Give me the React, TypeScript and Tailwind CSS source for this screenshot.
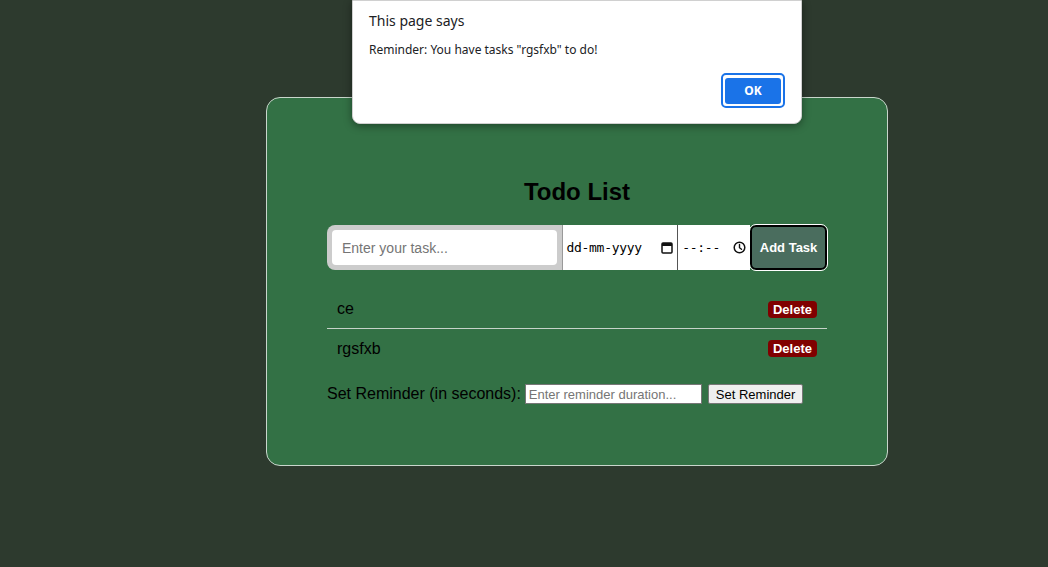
import React from 'react';

const tasks = ['ce', 'rgsfxb'];

const CalendarIcon = () => (
  <svg width="12" height="13" viewBox="0 0 12 13" fill="none">
    <rect x="1" y="2" width="10" height="10" rx="1" stroke="#111" strokeWidth="1.5" />
    <rect x="1" y="2" width="10" height="3" fill="#111" />
  </svg>
);

const ClockIcon = () => (
  <svg width="13" height="13" viewBox="0 0 13 13" fill="none">
    <circle cx="6.5" cy="6.5" r="5.3" stroke="#111" strokeWidth="1.5" />
    <path d="M6.5 3.5v3.2l2 1.6" stroke="#111" strokeWidth="1.4" strokeLinecap="round" />
  </svg>
);

const App: React.FC = () => {
  return (
    <div className="relative w-[1048px] h-[567px] bg-[#2d3a2e] overflow-hidden font-['Liberation_Sans',Arial,sans-serif]">
      <div className="pt-[97px] pl-[266px]">
        <div className="w-[622px] h-[369px] bg-[#337145] border border-[#c9d6cc] rounded-[14px] flex flex-col items-center pt-[79px]">
          <h1 className="text-[24px] font-bold text-black leading-[30px]">Todo List</h1>

          <div className="w-[500px] mt-[18px]">
            <div className="flex h-[45px]">
              <div className="w-[235px] bg-[#cccccc] rounded-l-[8px] p-[5px]">
                <input
                  className="w-full h-full bg-white rounded-[4px] px-[10px] text-[14px] text-black placeholder:text-[#757575] outline-none"
                  placeholder="Enter your task..."
                />
              </div>
              <div className="w-[116px] bg-white border-l border-[#999] flex items-center justify-between pl-[4px] pr-[4px] font-['DejaVu_Sans_Mono',monospace] text-[13px] text-black tracking-[-0.3px]">
                <span>dd-mm-yyyy</span>
                <CalendarIcon />
              </div>
              <div className="w-[73px] bg-white border-l border-[#555] flex items-center justify-between pl-[4px] pr-[4px] font-['DejaVu_Sans_Mono',monospace] text-[13px] text-black tracking-[-0.3px]">
                <span>--:--</span>
                <ClockIcon />
              </div>
              <button className="w-[77px] bg-[#4a6d5e] text-white text-[13px] font-bold rounded-[6px] border-2 border-black outline outline-1 outline-white">
                Add Task
              </button>
            </div>

            <ul className="mt-[20px]">
              {tasks.map((t, i) => (
                <li
                  key={t}
                  className={`flex items-center justify-between h-[39px] px-[10px] ${i === 0 ? 'border-b border-[#c7d3c9]' : ''}`}
                >
                  <span className="text-[16px] text-black">{t}</span>
                  <button className="bg-[#800000] text-white text-[13px] font-bold leading-[17px] px-[5px] rounded-[4px]">
                    Delete
                  </button>
                </li>
              ))}
            </ul>

            <div className="flex items-center mt-[14px] text-[16px] text-black">
              <span>Set Reminder (in seconds):</span>
              <input
                className="ml-[4px] w-[177px] h-[20px] bg-white border border-[#767676] px-[3px] text-[13px] placeholder:text-[#757575] outline-none"
                placeholder="Enter reminder duration..."
              />
              <button className="ml-[6px] h-[20px] px-[7px] bg-[#efefef] border border-[#767676] text-[13px] rounded-[2px]">
                Set Reminder
              </button>
            </div>
          </div>
        </div>
      </div>

      <div className="absolute left-[352px] top-0 w-[450px] h-[124px] bg-white rounded-b-[8px] shadow-[0_2px_8px_rgba(0,0,0,0.4)] border border-[#d0d0d0] font-['Noto_Sans',sans-serif] text-[#202124]">
        <div className="pl-[16px] pt-[9px] text-[14px] leading-[22px]">This page says</div>
        <div className="pl-[16px] pt-[9px] text-[12px] leading-[18px]">Reminder: You have tasks "rgsfxb" to do!</div>
        <div className="flex justify-end pr-[16px] pt-[14px]">
          <div className="rounded-[5px] border-2 border-[#1a73e8] p-[2px]">
            <button className="w-[56px] h-[26px] bg-[#1a73e8] text-white text-[12px] font-bold rounded-[3px]">OK</button>
          </div>
        </div>
      </div>
    </div>
  );
};

export default App;
